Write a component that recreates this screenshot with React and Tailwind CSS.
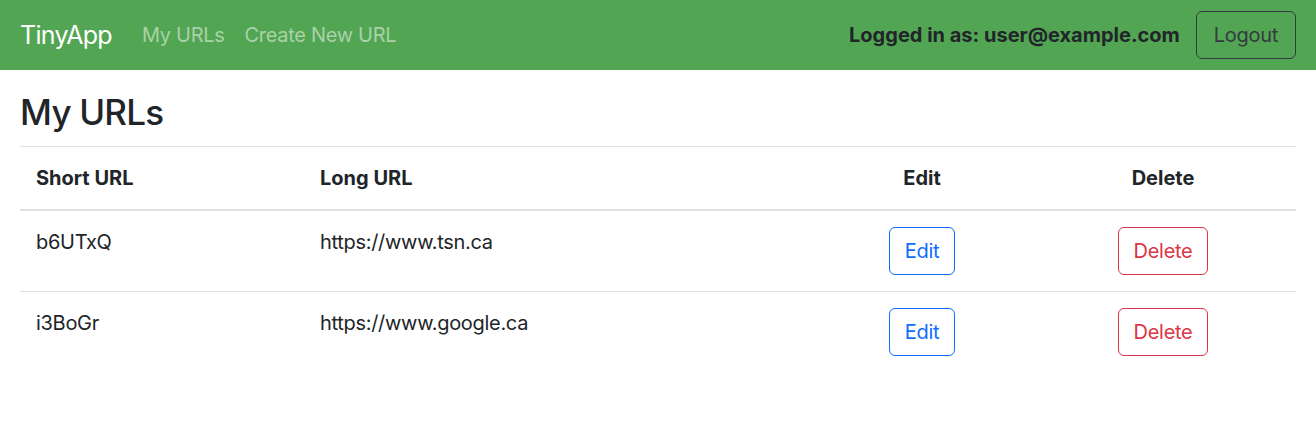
import React from 'react';

const urls = [
  { id: 'b6UTxQ', longURL: 'https://www.tsn.ca' },
  { id: 'i3BoGr', longURL: 'https://www.google.ca' },
];

const cols = 'grid grid-cols-[284px_510px_216px_266px]';

const App = () => {
  return (
    <div className="min-h-screen bg-white text-[#212529] font-['Inter','Liberation_Sans',sans-serif] text-[20px] leading-[30px] tracking-[-0.3px]">
      <nav className="h-[70px] bg-[#52a552] flex items-center justify-between px-5">
        <div className="flex items-center">
          <a href="#" className="text-[25px] leading-[38px] tracking-[-0.7px] text-white mr-5">TinyApp</a>
          <a href="#" className="px-[10px] text-[#a9d2a9]">My URLs</a>
          <a href="#" className="px-[10px] text-[#a9d2a9]">Create New URL</a>
        </div>
        <div className="flex items-center gap-4">
          <span className="font-bold tracking-normal">Logged in as: user@example.com</span>
          <button className="h-12 px-[17px] border border-[#343a40] rounded-[6px] text-[#343a40]">
            Logout
          </button>
        </div>
      </nav>

      <main className="px-5">
        <h2 className="text-[35px] leading-[42px] font-medium tracking-[-0.8px] pt-[21px] pb-[13px]">My URLs</h2>
        <div className="border-t border-[#dee2e6]">
          <div className={`${cols} font-bold tracking-normal border-b-2 border-[#dee2e6]`}>
            <div className="px-4 py-4">Short URL</div>
            <div className="px-4 py-4">Long URL</div>
            <div className="px-4 py-4 text-center">Edit</div>
            <div className="px-4 py-4 text-center">Delete</div>
          </div>
          {urls.map((url, i) => (
            <div
              key={url.id}
              className={`${cols} ${i < urls.length - 1 ? 'border-b border-[#dee2e6]' : ''}`}
            >
              <div className="px-4 py-4">{url.id}</div>
              <div className="px-4 py-4">{url.longURL}</div>
              <div className="px-4 py-4 flex justify-center">
                <button className="h-12 px-[15px] border border-[#0d6efd] rounded-[6px] text-[#0d6efd]">
                  Edit
                </button>
              </div>
              <div className="px-4 py-4 flex justify-center">
                <button className="h-12 px-[15px] border border-[#dc3545] rounded-[6px] text-[#dc3545]">
                  Delete
                </button>
              </div>
            </div>
          ))}
        </div>
      </main>
    </div>
  );
};

export default App;
